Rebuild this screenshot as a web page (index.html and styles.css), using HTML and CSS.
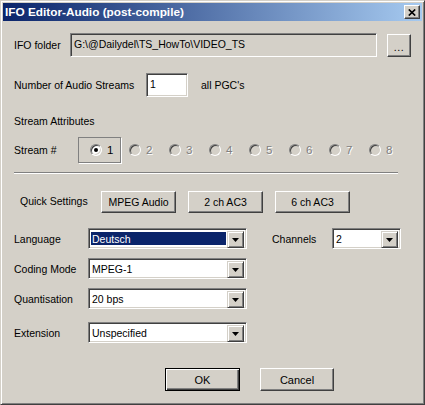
FILE: index.html
```html
<!DOCTYPE html>
<html>
<head>
<meta charset="utf-8">
<title>IFO Editor-Audio (post-compile)</title>
<link rel="stylesheet" href="styles.css">
</head>
<body>
<div class="window">
  <div class="titlebar">
    <span class="title">IFO Editor-Audio (post-compile)</span>
    <span class="close"><svg width="8" height="7" viewBox="0 0 8 7"><path d="M0.8 0.5L7.2 6.5M7.2 0.5L0.8 6.5" stroke="#000" stroke-width="1.7"/></svg></span>
  </div>
  <div class="content">
    <div class="row row-folder">
      <span class="lbl lbl-folder">IFO folder</span>
      <div class="field field-folder">G:\@Dailydel\TS_HowTo\VIDEO_TS</div>
      <button class="btn btn-browse">...</button>
    </div>
    <div class="row row-num">
      <span class="lbl lbl-num">Number of Audio Streams</span>
      <div class="field field-num">1</div>
      <span class="pgc">all PGC's</span>
    </div>
    <div class="attr">Stream Attributes</div>
    <div class="row row-stream">
      <span class="lbl lbl-stream">Stream #</span>
      <div class="radio-box">
        <span class="radio-item"><span class="radio checked"></span><span>1</span></span>
      </div>
      <div class="radio-list">
        <span class="radio-item disabled"><span class="radio"></span><span>2</span></span>
        <span class="radio-item disabled"><span class="radio"></span><span>3</span></span>
        <span class="radio-item disabled"><span class="radio"></span><span>4</span></span>
        <span class="radio-item disabled"><span class="radio"></span><span>5</span></span>
        <span class="radio-item disabled"><span class="radio"></span><span>6</span></span>
        <span class="radio-item disabled"><span class="radio"></span><span>7</span></span>
        <span class="radio-item disabled"><span class="radio"></span><span>8</span></span>
      </div>
    </div>
    <div class="sep"></div>
    <div class="row row-quick">
      <span class="lbl lbl-quick">Quick Settings</span>
      <div class="quick-btns">
        <button class="btn btn-quick">MPEG Audio</button>
        <button class="btn btn-quick">2 ch AC3</button>
        <button class="btn btn-quick">6 ch AC3</button>
      </div>
    </div>
    <div class="row row-sel row-lang">
      <span class="lbl lbl-sel">Language</span>
      <div class="select sel-wide">
        <span class="sel-text hl">Deutsch</span>
        <span class="sel-btn"><svg width="7" height="4" viewBox="0 0 7 4"><path d="M0 0H7L3.5 4Z" fill="#000"/></svg></span>
      </div>
      <span class="lbl lbl-chan">Channels</span>
      <div class="select sel-narrow">
        <span class="sel-text">2</span>
        <span class="sel-btn"><svg width="7" height="4" viewBox="0 0 7 4"><path d="M0 0H7L3.5 4Z" fill="#000"/></svg></span>
      </div>
    </div>
    <div class="row row-sel row-coding">
      <span class="lbl lbl-sel">Coding Mode</span>
      <div class="select sel-wide">
        <span class="sel-text">MPEG-1</span>
        <span class="sel-btn"><svg width="7" height="4" viewBox="0 0 7 4"><path d="M0 0H7L3.5 4Z" fill="#000"/></svg></span>
      </div>
    </div>
    <div class="row row-sel row-quant">
      <span class="lbl lbl-sel">Quantisation</span>
      <div class="select sel-wide">
        <span class="sel-text">20 bps</span>
        <span class="sel-btn"><svg width="7" height="4" viewBox="0 0 7 4"><path d="M0 0H7L3.5 4Z" fill="#000"/></svg></span>
      </div>
    </div>
    <div class="row row-sel row-ext">
      <span class="lbl lbl-sel">Extension</span>
      <div class="select sel-wide">
        <span class="sel-text">Unspecified</span>
        <span class="sel-btn"><svg width="7" height="4" viewBox="0 0 7 4"><path d="M0 0H7L3.5 4Z" fill="#000"/></svg></span>
      </div>
    </div>
    <div class="footer">
      <button class="btn btn-ok">OK</button>
      <button class="btn btn-cancel">Cancel</button>
    </div>
  </div>
</div>
</body>
</html>
```
FILE: styles.css
```css
* { box-sizing: border-box; }
html, body { margin: 0; padding: 0; }
body {
  width: 425px;
  height: 405px;
  overflow: hidden;
  background: #d4d0c8;
  font-family: "Liberation Sans", Arial, sans-serif;
  font-size: 10.5px;
  color: #000;
}
.window {
  width: 425px;
  height: 405px;
  background: #d4d0c8;
  border: 1px solid;
  border-color: #d4d0c8 #404040 #404040 #d4d0c8;
  box-shadow: inset 1px 1px #fff, inset -1px -1px #808080;
  padding: 2px;
  display: flex;
  flex-direction: column;
}
.titlebar {
  height: 18px;
  flex: none;
  background: linear-gradient(to right, #0a246a, #a6caf0);
  display: flex;
  align-items: center;
  justify-content: space-between;
  padding: 0 2px;
}
.title {
  color: #fff;
  font-weight: bold;
  font-size: 11.8px;
  white-space: nowrap;
}
.close {
  width: 16px;
  height: 14px;
  background: #d4d0c8;
  border: 1px solid;
  border-color: #fff #404040 #404040 #fff;
  box-shadow: inset -1px -1px #808080;
  display: flex;
  align-items: center;
  justify-content: center;
}
.content {
  padding: 12px 0 0 11px;
}
.row {
  display: flex;
  align-items: center;
}
.lbl { white-space: nowrap; }
.btn {
  font: inherit;
  color: #000;
  margin: 0;
  padding: 0;
  background: #d4d0c8;
  border: 1px solid;
  border-color: #fff #404040 #404040 #fff;
  box-shadow: inset -1px -1px #808080;
  display: flex;
  align-items: center;
  justify-content: center;
}
.field {
  border: 1px solid;
  border-color: #808080 #fff #fff #808080;
  box-shadow: inset 1px 1px #404040, inset -1px -1px #d4d0c8;
  white-space: nowrap;
}

/* folder row */
.row-folder { height: 24px; }
.lbl-folder { width: 56px; }
.field-folder {
  width: 307px;
  height: 24px;
  background: #d4d0c8;
  padding-left: 3px;
  line-height: 21px;
}
.btn-browse {
  margin-left: 10px;
  width: 24px;
  height: 23px;
  align-self: flex-end;
  letter-spacing: 0.5px;
  padding-top: 2px;
}

/* number row */
.row-num { margin-top: 16px; height: 24px; }
.lbl-num { width: 132px; }
.field-num {
  width: 42px;
  height: 24px;
  background: #fff;
  padding-left: 3px;
  line-height: 21px;
}
.pgc { margin-left: 13px; }

.attr {
  margin-top: 17px;
  height: 14px;
  line-height: 14px;
}

/* stream radios */
.row-stream { margin-top: 9px; height: 26px; }
.lbl-stream { width: 64px; }
.radio-box {
  width: 43px;
  height: 26px;
  border: 1px solid #808080;
  box-shadow: 1px 1px 0 #fff;
  display: flex;
  align-items: center;
  padding-left: 11px;
}
.radio-list {
  display: flex;
  align-items: center;
  margin-left: 8px;
}
.radio-item {
  display: flex;
  align-items: center;
  gap: 5px;
  width: 40px;
  font-size: 11.5px;
}
.radio-box .radio-item { width: auto; }
.radio {
  width: 12px;
  height: 12px;
  border-radius: 50%;
  border: 1px solid;
  border-color: #808080 #fff #fff #808080;
  box-shadow: inset 1px 1px #404040, inset -1px -1px #d4d0c8;
  background: #fff;
  display: flex;
  align-items: center;
  justify-content: center;
}
.radio.checked::after {
  content: "";
  width: 4px;
  height: 4px;
  border-radius: 50%;
  background: #000;
}
.radio-item.disabled { color: #808080; text-shadow: 1px 1px 0 #fff; }
.radio-item.disabled .radio { background: #d4d0c8; }

.sep {
  margin-top: 9px;
  width: 384px;
  height: 2px;
  border-top: 1px solid #808080;
  border-bottom: 1px solid #fff;
}

/* quick settings */
.row-quick { margin-top: 17px; height: 22px; padding-left: 6px; }
.lbl-quick { width: 81px; margin-top: -3px; }
.quick-btns { display: flex; gap: 12px; }
.btn-quick { width: 75px; height: 22px; }

/* selects */
.row-sel { height: 21px; }
.row-lang { margin-top: 15px; }
.row-coding { margin-top: 9px; }
.row-quant { margin-top: 9px; }
.row-ext { margin-top: 13px; }
.lbl-sel { width: 74px; }
.select {
  height: 21px;
  background: #fff;
  border: 1px solid;
  border-color: #808080 #fff #fff #808080;
  box-shadow: inset 1px 1px #404040, inset -1px -1px #d4d0c8;
  padding: 2px;
  display: flex;
}
.sel-wide { width: 159px; }
.sel-narrow { width: 69px; }
.sel-text {
  flex: 1;
  padding-left: 1px;
  line-height: 17px;
  white-space: nowrap;
  overflow: hidden;
}
.sel-text.hl {
  background: #0a246a;
  color: #fff;
  margin: 1px 1px 1px 0;
  line-height: 15px;
}
.sel-btn {
  width: 17px;
  height: 17px;
  flex: none;
  background: #d4d0c8;
  border: 1px solid;
  border-color: #d4d0c8 #404040 #404040 #d4d0c8;
  box-shadow: inset 1px 1px #fff, inset -1px -1px #808080;
  display: flex;
  align-items: center;
  justify-content: center;
}
.lbl-chan { margin-left: 25px; width: 60px; }

/* footer */
.footer {
  margin-top: 25px;
  padding-left: 151px;
  display: flex;
  gap: 20px;
}
.btn-ok {
  width: 75px;
  height: 23px;
  border: 1px solid #000;
  box-shadow: inset 1px 1px #fff, inset -1px -1px #404040, inset -2px -2px #808080;
  font-size: 11px;
}
.btn-cancel {
  width: 74px;
  height: 23px;
  font-size: 11px;
}
```
